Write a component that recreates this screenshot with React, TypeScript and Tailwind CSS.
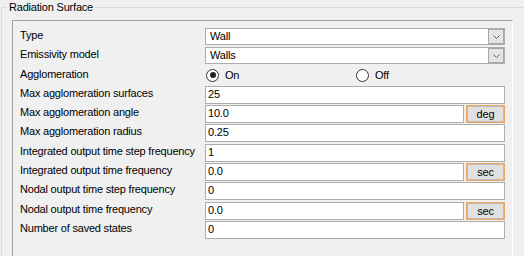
import React from 'react';

type Row =
  | { kind: 'combo'; label: string; value: string }
  | { kind: 'radio'; label: string }
  | { kind: 'text'; label: string; value: string; unit?: string };

const ROWS: Row[] = [
  { kind: 'combo', label: 'Type', value: 'Wall' },
  { kind: 'combo', label: 'Emissivity model', value: 'Walls' },
  { kind: 'radio', label: 'Agglomeration' },
  { kind: 'text', label: 'Max agglomeration surfaces', value: '25' },
  { kind: 'text', label: 'Max agglomeration angle', value: '10.0', unit: 'deg' },
  { kind: 'text', label: 'Max agglomeration radius', value: '0.25' },
  { kind: 'text', label: 'Integrated output time step frequency', value: '1' },
  { kind: 'text', label: 'Integrated output time frequency', value: '0.0', unit: 'sec' },
  { kind: 'text', label: 'Nodal output time step frequency', value: '0' },
  { kind: 'text', label: 'Nodal output time frequency', value: '0.0', unit: 'sec' },
  { kind: 'text', label: 'Number of saved states', value: '0' },
];

const Chevron = () => (
  <svg width="7" height="4" viewBox="0 0 7 4" fill="none">
    <path d="M0.5 0.5 L3.5 3.5 L6.5 0.5" stroke="#606060" strokeWidth="1" />
  </svg>
);

const Combo = ({ value }: { value: string }) => (
  <div className="flex h-[17px] w-[300px] border border-[#acacac] bg-white">
    <div className="flex-1 pl-[4px] leading-[15px]">{value}</div>
    <div className="flex h-full w-[16px] items-center justify-center border border-[#a8a8a8] bg-[#e5e5e5]">
      <Chevron />
    </div>
  </div>
);

const Radio = ({ checked, label }: { checked: boolean; label: string }) => (
  <div className="flex items-center gap-[6px]">
    <div className="flex h-[13px] w-[13px] items-center justify-center rounded-full border border-[#333333] bg-white">
      {checked && <div className="h-[6px] w-[6px] rounded-full bg-[#222222]" />}
    </div>
    <span className="leading-[15px]">{label}</span>
  </div>
);

const TextBox = ({ value, unit }: { value: string; unit?: string }) => (
  <div className="flex w-[300px] gap-[2px]">
    <div className="h-[18px] flex-1 border border-[#acacac] bg-white pl-[2px] leading-[15px]">{value}</div>
    {unit && (
      <div className="h-[18px] w-[39px] border border-[#f1a65e]">
        <div className="flex h-full items-center justify-center border border-[#bcbcbc] bg-[#e1e1e1] leading-[14px]">
          {unit}
        </div>
      </div>
    )}
  </div>
);

export default function App() {
  return (
    <div className="relative h-[256px] w-[524px] overflow-hidden bg-[#f0f0f0] font-['Liberation_Sans',Arial,sans-serif] text-[11px] tracking-[-0.2px] text-black">
      <div className="ml-[1px] mt-[7px] h-[300px] border-l border-t border-[#dcdcdc] pl-[10px] pt-[12px]">
        <div className="h-[260px] w-[501px] border-l border-t border-r border-[#a0a0a0] border-r-white pl-[7px] pt-[7px]">
          {ROWS.map((r) => (
            <div key={r.label} className="flex h-[19.3px] items-start">
              <div className="w-[185px] leading-[15px]">{r.label}</div>
              {r.kind === 'combo' && <Combo value={r.value} />}
              {r.kind === 'radio' && (
                <div className="flex w-[300px] pt-[1px]">
                  <div className="w-[151px] pl-[1px]">
                    <Radio checked label="On" />
                  </div>
                  <Radio checked={false} label="Off" />
                </div>
              )}
              {r.kind === 'text' && <TextBox value={r.value} unit={r.unit} />}
            </div>
          ))}
        </div>
      </div>
      <div className="absolute left-[7px] top-0 bg-[#f0f0f0] px-[2px] leading-[14px]">Radiation Surface</div>
    </div>
  );
}
